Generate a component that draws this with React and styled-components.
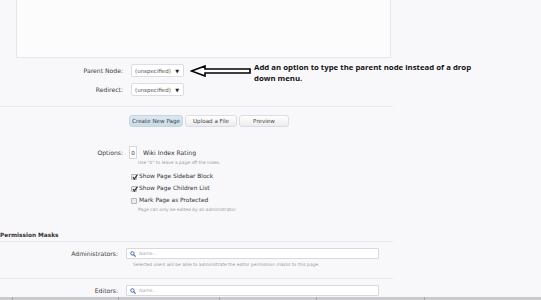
import React from "react";
import styled, { createGlobalStyle } from "styled-components";

const GlobalStyle = createGlobalStyle`
  html, body {
    margin: 0;
    padding: 0;
    background: #f8f8fb;
  }
  body {
    font-family: "DejaVu Sans", Verdana, sans-serif;
    color: #3a3a3a;
  }
`;

const Page = styled.div`
  width: 541px;
  height: 300px;
  overflow: hidden;
  display: flex;
  flex-direction: column;
  background: #f8f8fb;
`;

const TextBox = styled.div`
  margin-left: 16px;
  width: 375px;
  height: 58px;
  flex-shrink: 0;
  background: #fcfcfd;
  border: 1px solid #e6e6ec;
  border-top: none;
  box-sizing: border-box;
`;

const Row = styled.div`
  display: flex;
  align-items: ${p => p.align || "center"};
  gap: ${p => p.gap || 8}px;
  margin-top: ${p => p.top || 0}px;
  flex-shrink: 0;
`;

const Label = styled.div`
  width: ${p => p.w || 123}px;
  text-align: right;
  font-size: 6.1px;
  color: #3c3c3c;
  flex-shrink: 0;
  line-height: ${p => p.lh || 13}px;
`;

const Select = styled.div`
  width: 53px;
  height: 13px;
  box-sizing: border-box;
  border: 1px solid #dcdce2;
  border-radius: 2px;
  background: #fff;
  display: flex;
  align-items: center;
  justify-content: space-between;
  padding: 0 4px 0 3px;
  font-size: 5.5px;
  color: #555;
  span:last-child {
    font-size: 5px;
    color: #222;
  }
`;

const Annotation = styled.div`
  display: flex;
  align-items: flex-start;
  height: 13px;
  gap: 2px;
  margin-left: -2px;
  svg {
    margin-top: 1px;
    flex-shrink: 0;
  }
`;

const Note = styled.div`
  font-family: "Open Sans", "Noto Sans", sans-serif;
  font-weight: 700;
  font-size: 7.8px;
  line-height: 11px;
  color: #111;
  margin-top: -2px;
  width: 224px;
`;

const Divider = styled.div`
  width: 393px;
  height: 1px;
  background: #e8e8ee;
  margin-top: ${p => p.top || 0}px;
  flex-shrink: 0;
`;

const ButtonBar = styled.div`
  display: flex;
  gap: 2px;
  padding-left: 129px;
  margin-top: ${p => p.top || 0}px;
  flex-shrink: 0;
`;

const Button = styled.div`
  width: ${p => p.w}px;
  height: 12px;
  box-sizing: border-box;
  border: 1px solid ${p => (p.primary ? "#c4d6e2" : "#dcdce2")};
  border-radius: 3px;
  background: ${p =>
    p.primary
      ? "linear-gradient(#dbe8f0, #c9dce8)"
      : "linear-gradient(#ffffff, #ececf0)"};
  font-size: 5.6px;
  color: #444;
  display: flex;
  align-items: center;
  justify-content: center;
  white-space: nowrap;
`;

const Controls = styled.div`
  display: flex;
  flex-direction: column;
`;

const RatingLine = styled.div`
  display: flex;
  align-items: center;
  gap: 6px;
  font-size: 6.1px;
  color: #333;
`;

const NumberBox = styled.div`
  width: 8px;
  height: 13px;
  box-sizing: border-box;
  border: 1px solid #d8d8de;
  background: #fff;
  display: flex;
  align-items: center;
  justify-content: center;
  font-size: 5.6px;
  color: #333;
`;

const Hint = styled.div`
  font-size: 4.4px;
  color: #9a9aa0;
  margin-left: ${p => p.left || 9}px;
  margin-top: ${p => p.top || 0}px;
  line-height: 7px;
  flex-shrink: 0;
`;

const CheckLine = styled.div`
  display: flex;
  align-items: center;
  gap: 2px;
  margin-left: 2px;
  margin-top: ${p => p.top || 0}px;
  font-size: 5.9px;
  line-height: 9px;
  color: #333;
`;

const Box = styled.div`
  width: 6px;
  height: 6px;
  box-sizing: border-box;
  border: 1px solid #b4b4bc;
  border-radius: 1px;
  background: #ececf0;
  position: relative;
  svg {
    position: absolute;
    left: -1px;
    top: -2px;
  }
`;

const SectionTitle = styled.div`
  font-size: 5.8px;
  font-weight: 600;
  color: #333;
  margin-top: ${p => p.top || 0}px;
  line-height: 8px;
  flex-shrink: 0;
`;

const SearchInput = styled.div`
  width: 253px;
  height: 11px;
  box-sizing: border-box;
  border: 1px solid #d8d8e0;
  border-radius: 1px;
  background: #fff;
  display: flex;
  align-items: center;
  gap: 3px;
  padding-left: 3px;
  font-size: 4.6px;
  font-style: italic;
  color: #a8a8b0;
`;

const TaskBar = styled.div`
  margin-top: auto;
  height: 3px;
  flex-shrink: 0;
  background: #cbcbcf;
  display: flex;
`;

const TaskSlot = styled.div`
  width: ${p => p.w}px;
  border-right: 1px solid #a8a8ae;
  flex-shrink: 0;
`;

const Arrow = () => (
  <svg width="62" height="12" viewBox="0 0 62 12">
    <path
      d="M1.5 6 L15 1 L15 4 L60 4 L60 8 L15 8 L15 11 Z"
      fill="#fff"
      stroke="#000"
      strokeWidth="1.6"
      strokeLinejoin="miter"
    />
  </svg>
);

const Tick = () => (
  <svg width="8" height="8" viewBox="0 0 8 8">
    <path d="M2 4.2 L3.4 6 L6.5 1.5" fill="none" stroke="#333" strokeWidth="1.3" />
  </svg>
);

const Magnifier = () => (
  <svg width="6" height="6" viewBox="0 0 6 6">
    <circle cx="2.4" cy="2.4" r="1.7" fill="none" stroke="#3f6fa8" strokeWidth="1" />
    <path d="M3.6 3.6 L5.6 5.6" stroke="#3f6fa8" strokeWidth="1.2" />
  </svg>
);

const Check = ({ checked, children, top }) => (
  <CheckLine top={top}>
    <Box>{checked && <Tick />}</Box>
    <span>{children}</span>
  </CheckLine>
);

export default function App() {
  return (
    <>
      <GlobalStyle />
      <Page>
        <TextBox />

        <Row top={6} align="flex-start">
          <Label>Parent Node:</Label>
          <Select>
            <span>(unspecified)</span>
            <span>▼</span>
          </Select>
          <Annotation>
            <Arrow />
            <Note>
              Add an option to type the parent node instead of a drop down
              menu.
            </Note>
          </Annotation>
        </Row>

        <Row top={6}>
          <Label>Redirect:</Label>
          <Select>
            <span>(unspecified)</span>
            <span>▼</span>
          </Select>
        </Row>

        <Divider top={10} />

        <ButtonBar top={8}>
          <Button primary w={54}>Create New Page</Button>
          <Button w={52}>Upload a File</Button>
          <Button w={50}>Preview</Button>
        </ButtonBar>

        <Row top={19} align="flex-start" gap={6}>
          <Label w={123} lh={13}>Options:</Label>
          <Controls>
            <RatingLine>
              <NumberBox>0</NumberBox>
              <span>Wiki Index Rating</span>
            </RatingLine>
            <Hint top={0}>Use "0" to leave a page off the index.</Hint>
            <Check checked top={6}>Show Page Sidebar Block</Check>
            <Check checked top={3}>Show Page Children List</Check>
            <Check top={3}>Mark Page as Protected</Check>
            <Hint top={1}>Page can only be edited by an administrator.</Hint>
          </Controls>
        </Row>

        <SectionTitle top={18}>Permission Masks</SectionTitle>
        <Divider top={2} />

        <Row top={6}>
          <Label w={118} lh={11}>Administrators:</Label>
          <SearchInput>
            <Magnifier />
            <span>Name...</span>
          </SearchInput>
        </Row>
        <Hint left={133} top={2}>
          Selected users will be able to administrate the editor permission
          masks to this page.
        </Hint>
        <Divider top={10} />
        <Row top={6}>
          <Label w={118} lh={11}>Editors:</Label>
          <SearchInput>
            <Magnifier />
            <span>Name...</span>
          </SearchInput>
        </Row>

        <TaskBar>
          <TaskSlot w={12} />
          <TaskSlot w={105} />
          <TaskSlot w={100} />
          <TaskSlot w={96} />
          <TaskSlot w={107} />
        </TaskBar>
      </Page>
    </>
  );
}
